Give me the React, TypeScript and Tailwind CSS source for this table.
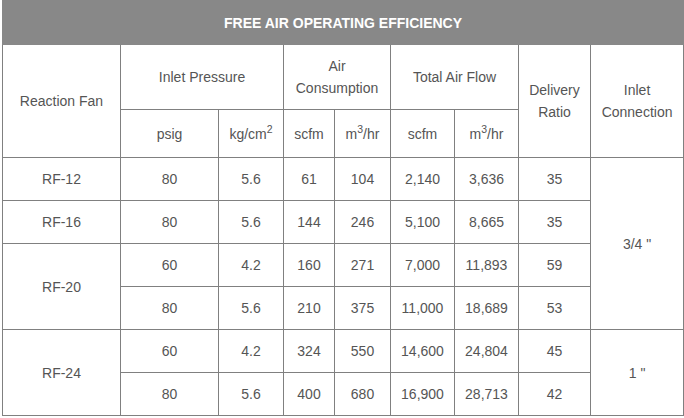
import React from "react";

const cell = "border border-[#808080] text-center align-middle font-normal p-0";

export default function App() {
  const rows: (string | { v: string; rs: number } | null)[][] = [];
  return (
    <div className="w-[684px] h-[418px] bg-white pl-[2px] text-[14px] leading-[22px] text-[#555555]" style={{ fontFamily: '"Liberation Sans", Arial, sans-serif' }}>
      <table className="border-collapse table-fixed w-[681px]">
        <colgroup>
          <col className="w-[118px]" />
          <col className="w-[98px]" />
          <col className="w-[65px]" />
          <col className="w-[51px]" />
          <col className="w-[56px]" />
          <col className="w-[64px]" />
          <col className="w-[64px]" />
          <col className="w-[72px]" />
          <col className="w-[93px]" />
        </colgroup>
        <tbody>
          <tr className="h-[44px]">
            <th colSpan={9} className="border border-[#888888] bg-[#888888] text-white font-bold text-center align-middle p-0">
              FREE AIR OPERATING EFFICIENCY
            </th>
          </tr>
          <tr className="h-[65px]">
            <td rowSpan={2} className={cell}>Reaction Fan</td>
            <td colSpan={2} className={cell}>Inlet Pressure</td>
            <td colSpan={2} className={cell}>Air<br />Consumption</td>
            <td colSpan={2} className={cell}>Total Air Flow</td>
            <td rowSpan={2} className={cell}>Delivery<br />Ratio</td>
            <td rowSpan={2} className={cell}>Inlet<br />Connection</td>
          </tr>
          <tr className="h-[48px]">
            <td className={cell}>psig</td>
            <td className={cell}>kg/cm<sup>2</sup></td>
            <td className={cell}>scfm</td>
            <td className={cell}>m<sup>3</sup>/hr</td>
            <td className={cell}>scfm</td>
            <td className={cell}>m<sup>3</sup>/hr</td>
          </tr>
          <tr className="h-[43px]">
            <td className={cell}>RF-12</td>
            <td className={cell}>80</td>
            <td className={cell}>5.6</td>
            <td className={cell}>61</td>
            <td className={cell}>104</td>
            <td className={cell}>2,140</td>
            <td className={cell}>3,636</td>
            <td className={cell}>35</td>
            <td rowSpan={4} className={cell}>3/4 "</td>
          </tr>
          <tr className="h-[43px]">
            <td className={cell}>RF-16</td>
            <td className={cell}>80</td>
            <td className={cell}>5.6</td>
            <td className={cell}>144</td>
            <td className={cell}>246</td>
            <td className={cell}>5,100</td>
            <td className={cell}>8,665</td>
            <td className={cell}>35</td>
          </tr>
          <tr className="h-[43px]">
            <td rowSpan={2} className={cell}>RF-20</td>
            <td className={cell}>60</td>
            <td className={cell}>4.2</td>
            <td className={cell}>160</td>
            <td className={cell}>271</td>
            <td className={cell}>7,000</td>
            <td className={cell}>11,893</td>
            <td className={cell}>59</td>
          </tr>
          <tr className="h-[43px]">
            <td className={cell}>80</td>
            <td className={cell}>5.6</td>
            <td className={cell}>210</td>
            <td className={cell}>375</td>
            <td className={cell}>11,000</td>
            <td className={cell}>18,689</td>
            <td className={cell}>53</td>
          </tr>
          <tr className="h-[43px]">
            <td rowSpan={2} className={cell}>RF-24</td>
            <td className={cell}>60</td>
            <td className={cell}>4.2</td>
            <td className={cell}>324</td>
            <td className={cell}>550</td>
            <td className={cell}>14,600</td>
            <td className={cell}>24,804</td>
            <td className={cell}>45</td>
            <td rowSpan={2} className={cell}>1 "</td>
          </tr>
          <tr className="h-[43px]">
            <td className={cell}>80</td>
            <td className={cell}>5.6</td>
            <td className={cell}>400</td>
            <td className={cell}>680</td>
            <td className={cell}>16,900</td>
            <td className={cell}>28,713</td>
            <td className={cell}>42</td>
          </tr>
        </tbody>
      </table>
    </div>
  );
}
